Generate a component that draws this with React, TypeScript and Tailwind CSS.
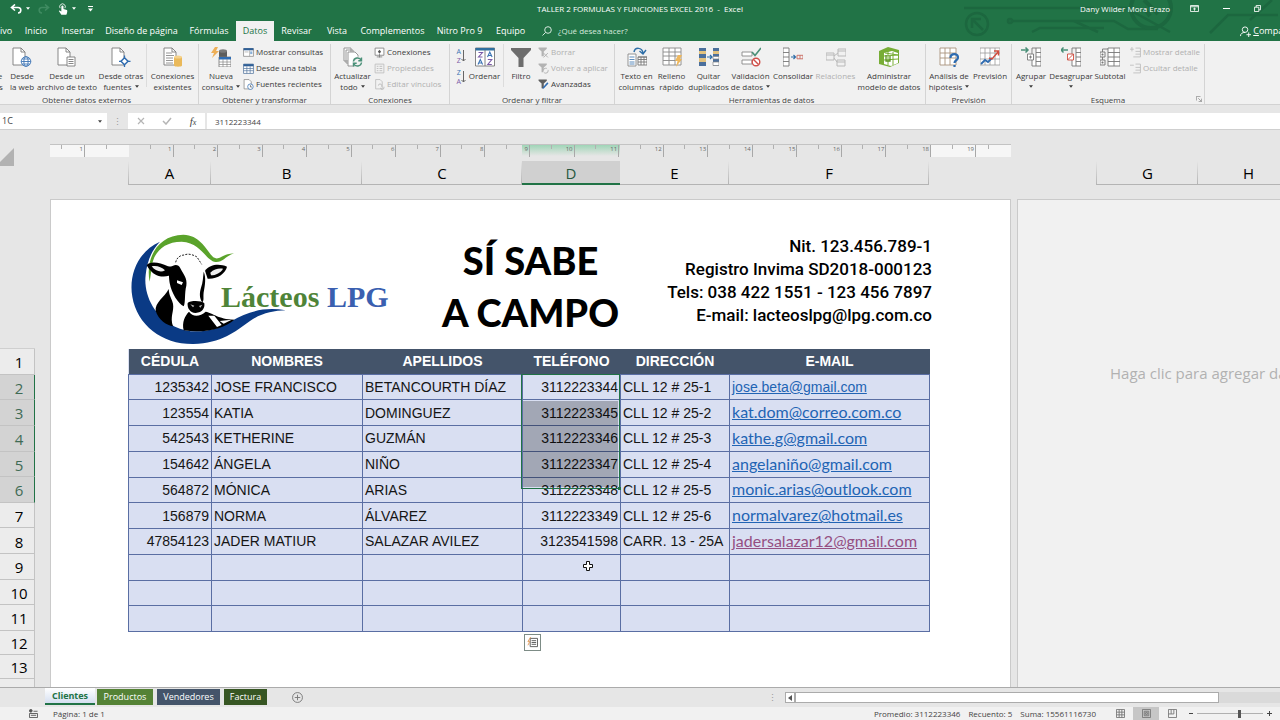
import type { ReactNode } from "react";
import { clsx } from "clsx";

/* ---------- icons ---------- */

function Icon({ children, small }: { children: ReactNode; small?: boolean }) {
  return (
    <svg viewBox="0 0 20 20" fill="none" aria-hidden="true" className={small ? "size-[11px] shrink-0" : "size-5 shrink-0"}>
      {children}
    </svg>
  );
}

function Sheet({ x = 2 }: { x?: number }) {
  return (
    <g transform={`translate(${x} 0)`} stroke="#7b7b7b" strokeWidth="0.9">
      <path d="M1 1h8l4 4v13H1z" fill="#fff" />
      <path d="M9 1v4h4" />
    </g>
  );
}

const icons: Record<string, ReactNode> = {
  access: (
    <>
      <Sheet x={1} />
      <path d="M9 10v7c0 2 8 2 8 0v-7" stroke="#c8504b" fill="#fff" />
      <ellipse cx="13" cy="10" rx="4" ry="1.6" stroke="#c8504b" fill="#fff" />
    </>
  ),
  web: (
    <>
      <Sheet x={0} />
      <g stroke="#3c74b4" strokeWidth="0.9">
        <circle cx="14" cy="14.5" r="4.8" fill="#fff" />
        <ellipse cx="14" cy="14.5" rx="2.1" ry="4.8" />
        <path d="M9.2 14.5h9.6M10 12h8M10 17h8" />
      </g>
    </>
  ),
  text: (
    <>
      <Sheet x={0} />
      <g stroke="#7b7b7b" strokeWidth="0.9">
        <path d="M10 10h8v9h-8z" fill="#fff" />
        <path d="M11.5 12.5h5M11.5 14.5h5M11.5 16.5h5" />
      </g>
    </>
  ),
  other: (
    <>
      <Sheet x={0} />
      <path d="M13.5 10.8l3.5 3.5-3.5 3.5-3.5-3.5z" stroke="#2e6bb0" strokeWidth="1.5" fill="#fff" />
      <path d="M13.5 8.5v2M13.5 18v2M8 14.3h2M17 14.3h2.5" stroke="#2e6bb0" strokeWidth="1.3" />
    </>
  ),
  existing: (
    <>
      <Sheet x={0} />
      <path d="M3 6h6M3 8.5h8M3 11h7M3 13.5h7M3 16h7" stroke="#8b8b8b" strokeWidth="0.9" />
      <path d="M11 10v8.5c0 1.6 8 1.6 8 0V10z" fill="#eab95a" />
      <ellipse cx="15" cy="10" rx="4" ry="1.6" fill="#f5d28c" />
    </>
  ),
  query: (
    <>
      <path d="M8 4v9c0 2 8 2 8 0V4z" fill="#5d5d5d" />
      <ellipse cx="12" cy="4" rx="4" ry="1.8" fill="#7a7a7a" />
      <path d="M4 0h3L5 4h3L1 11l2-5H0z" fill="#edaf58" />
      <path d="M8 10h12v10H8z" fill="#fff" stroke="#777" strokeWidth="0.8" />
      <path d="M8 10h12v2.5H8z" fill="#2f6db5" />
      <path d="M12 12v8M16 12v8M8 15h12M8 17.5h12" stroke="#888" strokeWidth="0.7" />
    </>
  ),
  show: (
    <>
      <path d="M1 3h18v14H1z" fill="#fff" stroke="#777" strokeWidth="1.2" />
      <path d="M1 2h18v4H1z" fill="#2f5f96" />
      <path d="M12 6v11M3 9h7" stroke="#999" strokeWidth="1.2" />
      <path d="M13 8h4v5h-4z" fill="#8ab0d8" />
    </>
  ),
  grid: (
    <>
      <path d="M1 2h18v17H1z" fill="#fff" stroke="#5779a0" strokeWidth="1.4" />
      <path d="M1 2h18v4H1z" fill="#2f5f96" />
      <path d="M7 6v13M13 6v13M1 10h18M1 14h18" stroke="#5779a0" strokeWidth="1.3" />
    </>
  ),
  recent: (
    <>
      <path d="M2 1h9l4 4v13H2z" fill="#fff" stroke="#777" strokeWidth="1.2" />
      <circle cx="13.5" cy="14" r="5" fill="#fff" stroke="#3c74b4" strokeWidth="1.4" />
      <path d="M13.5 11v3.5h3" stroke="#555" strokeWidth="1.3" />
    </>
  ),
  refresh: (
    <>
      <path d="M1 1h7v13H1zM3 3h7v13H3z" fill="#fff" stroke="#8b8b8b" strokeWidth="0.9" />
      <path d="M5 5h7l3 3v11H5z" fill="#fff" stroke="#8b8b8b" strokeWidth="0.9" />
      <circle cx="14.5" cy="15" r="5.4" fill="#f1f1f1" />
      <path
        d="M10.5 14.5c.4-4 6-4.8 7.7-1.3M18.5 10.5v3.2h-3.2M18.5 15.5c-.4 4-6 4.8-7.7 1.3M10.5 19.5v-3.2h3.2"
        stroke="#4a9078"
        strokeWidth="1.4"
      />
    </>
  ),
  link: (
    <>
      <path d="M2 2h16v13H2z" fill="#fff" stroke="#777" strokeWidth="1.4" />
      <path d="M10 5l3 3.5-3 3.500-3-3.500z" fill="#555" />
      <path d="M10 12v7M5 18h10" stroke="#777" strokeWidth="1.4" />
    </>
  ),
  props: (
    <>
      <path d="M2 2h16v16H2z" stroke="#b9b9b9" strokeWidth="1.4" />
      <path d="M5 6h3M10 6h5M5 10h3M10 10h5M5 14h3M10 14h5" stroke="#b9b9b9" strokeWidth="1.6" />
    </>
  ),
  editlinks: (
    <>
      <path d="M3 1h8l4 4v13H3z" stroke="#b9b9b9" strokeWidth="1.4" />
      <path d="M8 12a3 3 0 0 1 6 0v2M18 14v2a3 3 0 0 1-6 0" stroke="#b9b9b9" strokeWidth="1.6" />
    </>
  ),
  sort: (
    <>
      <path d="M.5 1h19v18H.5z" fill="#fff" stroke="#777" strokeWidth="0.9" />
      <path d="M.5 1h19v2.500H.5z" fill="#2f6f9f" />
      <path d="M10 3v16" stroke="#777" strokeWidth="0.9" />
      <path d="M3.5 5.500h4L3.500 10h4M12.800 12.500h4l-4 5h4" stroke="#7b5ba8" strokeWidth="1.1" />
      <path d="M3 17.500l2.300-5 2.300 5M4 16h2.800M12.500 10l2.300-5 2.300 5M13.500 8.500h2.800" stroke="#3c74b4" strokeWidth="1.1" />
    </>
  ),
  filter: <path d="M0 1h20v2l-7.500 8v9h-5v-9L0 3z" fill="#6d6d6d" />,
  clear: (
    <>
      <path d="M1 1h15v2l-5.500 5v9h-4V8L1 3z" fill="#b3b3b3" />
      <path d="M10 11l8 8M18 11l-8 8" stroke="#b3b3b3" strokeWidth="1.8" />
    </>
  ),
  reapply: (
    <>
      <path d="M1 1h15v2l-5.500 5v9h-4V8L1 3z" fill="#b3b3b3" />
      <circle cx="14" cy="14" r="4.500" fill="#f1f1f1" stroke="#b3b3b3" strokeWidth="1.8" strokeDasharray="10 3" />
    </>
  ),
  advanced: (
    <>
      <path d="M1 1h15v2l-5.500 5v9h-4V8L1 3z" fill="#5f5f5f" />
      <path d="M17 6l2 2-8 9-3 1 1-3z" fill="#2f6db5" />
    </>
  ),
  columns: (
    <>
      <path d="M1 7h8v12H1z" fill="#fff" stroke="#888" strokeWidth="0.9" />
      <path d="M2.500 10h5M2.500 12.500h5M2.500 15h5M2.500 17h5" stroke="#4a7fb5" strokeWidth="0.9" />
      <path d="M11 10h9v8h-9z" fill="#fff" stroke="#777" strokeWidth="0.9" />
      <path d="M11 10h9v2.500h-9M14 10v8M17 10v8M11 15h9" stroke="#777" strokeWidth="0.9" />
      <path d="M7 5c1-5 8-5 9 1M12.500 4l3.500 3 3-4" stroke="#2f6fa8" strokeWidth="1.5" />
    </>
  ),
  flash: (
    <>
      <path d="M1 1h18v17H1z" fill="#fff" stroke="#888" strokeWidth="0.9" />
      <path d="M1 5h18M1 9h18M1 13.500h18M7 1v17M13 1v17" stroke="#888" strokeWidth="0.9" />
      <path d="M16 8h4l-2 4h2l-6 8 1.500-6H13z" fill="#edb75e" />
    </>
  ),
  dedupe: (
    <>
      <path d="M0 1h7v18H0zM14 1h6v18h-6z" fill="#4b6f9c" />
      <path d="M0 4h7v3H0zM0 11h7v4H0zM14 4h6v3h-6z" fill="#e3c27e" />
      <path d="M14 9.500h6v2.500h-6zM14 15h6v3.500h-6z" fill="#fff" stroke="#888" strokeWidth="0.7" />
      <path d="M8 10h5M11 8l2 2-2 2" stroke="#2f6fa8" strokeWidth="1.2" />
    </>
  ),
  validate: (
    <>
      <path d="M1 5h10v4H1zM1 13h10v4H1z" fill="#fff" stroke="#888" strokeWidth="0.9" />
      <path d="M11 5l3 3.500L20 1" stroke="#4a9078" strokeWidth="1.7" />
      <circle cx="15" cy="15" r="3.800" stroke="#d0504a" strokeWidth="1.4" fill="#fff" />
      <path d="M12.500 12.500l5 5" stroke="#d0504a" strokeWidth="1.4" />
    </>
  ),
  consolidate: (
    <>
      <path d="M0 1h6v18H0zM0 5.500h6M0 10h6M0 14.500h6" fill="#fff" stroke="#777" strokeWidth="0.9" />
      <path d="M8 10h4M10.500 8l2 2-2 2" stroke="#2f6fa8" strokeWidth="1.2" />
      <path d="M14 8.300h6v3.500h-6zM17 8.300v3.500" stroke="#c96a60" strokeWidth="0.9" />
    </>
  ),
  relations: (
    <g stroke="#b9b9b9">
      <path d="M0 6h8v7H0zM12 2h8v7h-8zM11 13h8v6h-8zM0 8h8M12 4h8M11 15h8M8 9l4-3M8 11l3 4" />
    </g>
  ),
  model: (
    <>
      <path d="M0 4L9 0l11 3v13L11 20 0 17z" fill="#77ad35" />
      <path d="M5 6l8-2 6 2v10l-7 3-7-2z" fill="#fff" />
      <path d="M9 4v14M14 5v13M5 9l14-1M5 13l14-1M6 6l13 2" stroke="#77ad35" />
      <path d="M7 8v6h4V9" stroke="#5a9422" strokeWidth="1.3" />
    </>
  ),
  whatif: (
    <>
      <path d="M1 1h16v17H1zM1 6h16M1 11h16M6 1v17M11 1v17" stroke="#a9937d" strokeWidth="0.9" fill="#fff" />
      <path d="M11.500 11c0-5 7.500-5 7.500-.500 0 3-3.500 2.500-3.500 5.500M15.500 18v2" stroke="#2e6bb0" strokeWidth="2.2" />
    </>
  ),
  forecast: (
    <>
      <path d="M0 1h20v17H0zM0 6h20M0 12h20M5 1v17M10 1v17M15 1v17" stroke="#999" strokeWidth="0.8" fill="#fff" />
      <path d="M1 17l4-4 3 2 4-4" stroke="#2e6bb0" strokeWidth="1.8" />
      <path d="M9 11l3 1 6-7M14 4h4.500v4.500" stroke="#cf4d3f" strokeWidth="1.5" />
    </>
  ),
  group: (
    <>
      <path d="M0 3h7M4.500.5L7 3 4.500 5.500" stroke="#4a9078" strokeWidth="1.5" />
      <path d="M15 1h5v18h-5zM15 5.500h5M15 10h5M15 14.500h5M11 1h4M11 1v18h4" stroke="#777" strokeWidth="0.9" fill="#fff" />
      <path d="M6.500 7h6v6h-6zM9.500 8.500v3M8 10h3" stroke="#777" strokeWidth="0.9" fill="#fff" />
    </>
  ),
  ungroup: (
    <>
      <path d="M7 3H0M2.500.5L0 3l2.500 2.500" stroke="#4a9078" strokeWidth="1.5" />
      <path d="M15 1h5v18h-5zM15 5.500h5M15 10h5M15 14.500h5M11 1h4M11 1v18h4" stroke="#777" strokeWidth="0.9" fill="#fff" />
      <path d="M6.500 7h6v6h-6zM6.500 13l6-6" stroke="#cf4d3f" strokeWidth="0.9" fill="#fff" />
    </>
  ),
  subtotal: (
    <>
      <path d="M8 1h12v18H8zM8 5.500h12M8 10h12M8 14.500h12M14 1v18" stroke="#777" strokeWidth="0.9" fill="#fff" />
      <path d="M0 5h5v5H0zM0 13h5v5H0zM2.500 6.500v2M1.500 7.500h2M2.500 14.500v2M1.500 15.500h2M2.500 5V2H8M2.500 13v-3" stroke="#777" strokeWidth="0.9" />
    </>
  ),
  detailPlus: <path d="M0 4h7M3.500 0v8M10 2h9M10 8h9M10 13h9M6 18h13M19 2v16" stroke="#bbb" strokeWidth="1.5" />,
  detailMinus: <path d="M0 4h7M10 2h9M10 8h9M10 13h9M6 18h13M19 2v16" stroke="#bbb" strokeWidth="1.5" />,
};

/* ---------- ribbon ---------- */

function Caret() {
  return (
    <svg viewBox="0 0 6 4" aria-hidden="true" className="h-[3px] w-1 shrink-0">
      <path d="M0 0h6L3 4z" fill="currentColor" />
    </svg>
  );
}

type BigProps = { icon: string; lines: string[]; width: string; caret?: boolean; off?: boolean };

function Big({ icon, lines, width, caret, off }: BigProps) {
  return (
    <button
      className={clsx("flex shrink-0 flex-col items-center pt-[3px] leading-[11px] whitespace-nowrap", width, off && "text-[#b0b0b0]")}
    >
      <Icon>{icons[icon]}</Icon>
      <span className="mt-[3px]">{lines[0]}</span>
      <span className="flex min-h-[11px] items-center gap-[3px]">
        {lines[1]}
        {caret && <Caret />}
      </span>
    </button>
  );
}

function Small({ icon, label, off }: { icon: string; label: string; off?: boolean }) {
  return (
    <button className={clsx("flex h-4 items-center gap-[2px] whitespace-nowrap", off && "text-[#b0b0b0]")}>
      <Icon small>{icons[icon]}</Icon>
      {label}
    </button>
  );
}

function Group({ label, width, children }: { label: string; width: string; children: ReactNode }) {
  return (
    <div className={clsx("relative mt-[3px] flex shrink-0 flex-col border-r border-[#d4d4d4]", width)}>
      <div className="flex h-[51px]">{children}</div>
      <div className="text-center leading-[9px] text-[#444]">{label}</div>
    </div>
  );
}

function SortButton({ a, b }: { a: string; b: string }) {
  return (
    <button className="flex items-center" aria-label={`Ordenar de ${a} a ${b}`}>
      <span className="flex flex-col text-[7px] leading-[9px]">
        <span className="text-[#3c74b4]">{a}</span>
        <span className="text-[#7b5ba8]">{b}</span>
      </span>
      <svg viewBox="0 0 5 12" className="h-3 w-[5px]" fill="none" stroke="#666">
        <path d="M2.500 0v11M.5 9l2 2 2-2" />
      </svg>
    </button>
  );
}

function Divider() {
  return <div className="mb-2 w-px bg-[#dcdcdc]" />;
}

function Ribbon() {
  return (
    <div className="flex h-16 shrink-0 border-b border-[#d2d2d2] bg-[#f1f1f1] text-[8px] text-[#3b3b3b]">
      <Group label="Obtener datos externos" width="-ml-[25px] w-[224px]">
        <Big icon="access" lines={["Desde", "Access"]} width="w-[31px]" />
        <Big icon="web" lines={["Desde", "la web"]} width="w-8" />
        <Big icon="text" lines={["Desde un", "archivo de texto"]} width="w-[58px]" />
        <Big icon="other" lines={["Desde otras", "fuentes"]} width="w-[50px]" caret />
        <Divider />
        <Big icon="existing" lines={["Conexiones", "existentes"]} width="w-[51px]" />
      </Group>
      <Group label="Obtener y transformar" width="w-[132px]">
        <Big icon="query" lines={["Nueva", "consulta"]} width="w-[44px]" caret />
        <div>
          <Small icon="show" label="Mostrar consultas" />
          <Small icon="grid" label="Desde una tabla" />
          <Small icon="recent" label="Fuentes recientes" />
        </div>
      </Group>
      <Group label="Conexiones" width="w-[119px]">
        <Big icon="refresh" lines={["Actualizar", "todo"]} width="w-[43px]" caret />
        <div>
          <Small icon="link" label="Conexiones" />
          <Small icon="props" label="Propiedades" off />
          <Small icon="editlinks" label="Editar vínculos" off />
        </div>
      </Group>
      <Group label="Ordenar y filtrar" width="w-[165px]">
        <div className="flex w-4 flex-col items-end gap-[3px] pt-[3px]">
          <SortButton a="A" b="Z" />
          <SortButton a="Z" b="A" />
        </div>
        <Big icon="sort" lines={["Ordenar"]} width="w-[37px]" />
        <Divider />
        <Big icon="filter" lines={["Filtro"]} width="w-[34px]" />
        <div>
          <Small icon="clear" label="Borrar" off />
          <Small icon="reapply" label="Volver a aplicar" off />
          <Small icon="advanced" label="Avanzadas" />
        </div>
      </Group>
      <Group label="Herramientas de datos" width="w-[311px] pl-[3px]">
        <Big icon="columns" lines={["Texto en", "columnas"]} width="w-[37px]" />
        <Big icon="flash" lines={["Relleno", "rápido"]} width="w-[33px]" />
        <Big icon="dedupe" lines={["Quitar", "duplicados"]} width="w-[41px]" />
        <Big icon="validate" lines={["Validación", "de datos"]} width="w-[43px]" caret />
        <Big icon="consolidate" lines={["Consolidar"]} width="w-[42px]" />
        <Big icon="relations" lines={["Relaciones"]} width="w-[43px]" off />
        <Big icon="model" lines={["Administrar", "modelo de datos"]} width="w-[64px]" />
      </Group>
      <Group label="Previsión" width="w-[86px]">
        <Big icon="whatif" lines={["Análisis de", "hipótesis"]} width="w-[46px]" caret />
        <Big icon="forecast" lines={["Previsión"]} width="w-9" />
      </Group>
      <Group label="Esquema" width="w-[193px]">
        <Big icon="group" lines={["Agrupar"]} width="w-[38px]" caret />
        <Big icon="ungroup" lines={["Desagrupar"]} width="w-[42px]" caret />
        <Big icon="subtotal" lines={["Subtotal"]} width="w-[36px]" />
        <div className="pl-[2px]">
          <Small icon="detailPlus" label="Mostrar detalle" off />
          <Small icon="detailMinus" label="Ocultar detalle" off />
        </div>
        <svg viewBox="0 0 8 8" className="absolute right-[2px] bottom-[2px] size-[6px]" fill="none" stroke="#888">
          <path d="M.5 6V.5H6M3 3l4 4M7.500 3.500v4h-4" />
        </svg>
      </Group>
    </div>
  );
}

/* ---------- title bar and tabs ---------- */

const tabs = [
  { name: "Archivo", width: "w-[41px]" },
  { name: "Inicio", width: "w-[38px]" },
  { name: "Insertar", width: "w-[46px]" },
  { name: "Diseño de página", width: "w-[81px]" },
  { name: "Fórmulas", width: "w-[54px]" },
  { name: "Datos", width: "w-[38px]" },
  { name: "Revisar", width: "w-[45px]" },
  { name: "Vista", width: "w-9" },
  { name: "Complementos", width: "w-[75px]" },
  { name: "Nitro Pro 9", width: "w-[59px]" },
  { name: "Equipo", width: "w-[43px]" },
];

function Header() {
  return (
    <header className="relative shrink-0 overflow-hidden bg-[#217346] text-[9px] text-white">
      <svg viewBox="0 0 320 41" className="absolute top-0 right-0 h-[41px] w-80" fill="none" stroke="#1c673f" strokeWidth="2.5" aria-hidden="true">
        <path d="M4 8h100l30 0M52 21h62l24 11M72 32l8-4h34l30 0M114 21h40l14 8h30M146 8h20l44 24M250 33l18-18h50M290 20l22-20" />
        <circle cx="17" cy="24" r="11" />
        <path d="M12 19l11 11M12 28V19h9" />
        <circle cx="50" cy="21" r="2" />
        <circle cx="191" cy="8" r="20" strokeWidth="4" />
        <path d="M184 0l14 14M184 8l6 8" strokeWidth="4" />
      </svg>
      <div className="relative grid h-[17px] grid-cols-3 items-center">
        <div className="flex items-center gap-2 pl-[10px]">
          <svg viewBox="0 0 12 10" className="h-[10px] w-3" fill="none" stroke="#fff" strokeWidth="1.6">
            <path d="M5 .5L1.500 3.500 5 6.500M1.500 3.500H8c4 0 3.500 5.500 0 5.500" />
          </svg>
          <span className="-ml-1 flex">
            <Caret />
          </span>
          <svg viewBox="0 0 12 10" className="h-[10px] w-3" fill="none" stroke="#3f8b61" strokeWidth="1.6">
            <path d="M7 .5l3.500 3L7 6.500M10.500 3.500H4C0 3.500.5 9 4 9" />
          </svg>
          <svg viewBox="0 0 12 14" className="h-3 w-[10px]" fill="#fff">
            <path d="M4 4a1.300 1.300 0 0 1 2.600 0v3l4 1.200c1 .4.6 3-.6 5.800H4L1 9.500l1-.8 2 1.300z" />
            <path d="M2.500 6a3.400 3.400 0 1 1 5.800 0" fill="none" stroke="#fff" />
          </svg>
          <span className="-ml-1 flex">
            <Caret />
          </span>
          <svg viewBox="0 0 6 7" className="ml-1 h-[6px] w-[5px]" fill="#fff">
            <path d="M0 0h6v1H0zM0 3h6L3 6.500z" />
          </svg>
        </div>
        <div className="text-center text-[8px]">TALLER 2 FORMULAS Y FUNCIONES EXCEL 2016 &nbsp;-&nbsp; Excel</div>
        <div className="flex items-center justify-end gap-6 pr-[19px]">
          <span className="-mr-1 text-[8px]">Dany Wilder Mora Erazo</span>
          <svg viewBox="0 0 10 8" className="h-[7px] w-[9px]" fill="none" stroke="#fff">
            <path d="M.5.5h9v7h-9zM.5 2h9M5 6.500V3.500M3.500 4.800L5 3.500l1.500 1.300" />
          </svg>
          <span className="h-px w-[7px] bg-white" />
          <svg viewBox="0 0 8 8" className="size-[7px]" fill="none" stroke="#fff">
            <path d="M.5 2.500h5v5h-5zM2.500 2.500v-2h5v5h-2" />
          </svg>
        </div>
      </div>
      <nav className="relative mt-1 -ml-6 flex h-5 items-center whitespace-nowrap">
        {tabs.map((t) => (
          <button
            key={t.name}
            className={clsx("h-5 shrink-0", t.width, t.name === "Datos" && "bg-[#f1f1f1] text-[#217346]")}
          >
            {t.name}
          </button>
        ))}
        <svg viewBox="0 0 10 10" className="ml-[10px] size-[10px]" fill="none" stroke="#d5e8dd">
          <circle cx="6" cy="4" r="3.300" />
          <path d="M3.600 6.400L.5 9.500" />
        </svg>
        <button className="ml-[6px] text-[8px] text-[#d5e8dd]">¿Qué desea hacer?</button>
        <button className="-mr-4 ml-auto flex items-center gap-[2px]">
          <svg viewBox="0 0 12 12" className="size-[11px]" fill="none" stroke="#fff">
            <circle cx="5.500" cy="4" r="3" />
            <path d="M.5 11C.5 8 3 7 5.500 7M7 9.500h5M9.500 7v5" />
          </svg>
          <span>
            <u>C</u>ompartir
          </span>
        </button>
      </nav>
    </header>
  );
}

function FormulaBar() {
  return (
    <div className="flex h-[25px] shrink-0 items-end border-b border-[#cfcfcf] bg-[#e6e6e6] pt-2 text-[9px] text-[#444]">
      <div className="flex h-4 w-[107px] items-center bg-white pr-[5px]">
        <input aria-label="Cuadro de nombres" defaultValue="1C" className="w-0 flex-1 pl-[2px] outline-none" />
        <Caret />
      </div>
      <div className="w-[21px] self-center text-center leading-none text-[#999]">⋮</div>
      <div className="flex h-4 w-[77px] items-center justify-around bg-white">
        <svg viewBox="0 0 8 8" className="size-2" stroke="#b5b5b5" strokeWidth="1.2">
          <path d="M1 1l6 6M7 1L1 7" />
        </svg>
        <svg viewBox="0 0 10 8" className="h-2 w-[10px]" fill="none" stroke="#b5b5b5" strokeWidth="1.5">
          <path d="M1 4l3 3 5-6" />
        </svg>
        <button className="font-['Liberation_Serif'] text-[11px] leading-none italic">
          f<span className="text-[8px]">x</span>
        </button>
      </div>
      <input aria-label="Barra de fórmulas" defaultValue="3112223344" className="ml-[2px] h-4 flex-1 bg-white pl-2 text-[8px] outline-none" />
    </div>
  );
}

/* ---------- sheet ---------- */

const columns = [
  { letter: "A", width: "w-[83px]", title: "CÉDULA" },
  { letter: "B", width: "w-[151px]", title: "NOMBRES" },
  { letter: "C", width: "w-[160px]", title: "APELLIDOS" },
  { letter: "D", width: "w-[98px]", title: "TELÉFONO" },
  { letter: "E", width: "w-[109px]", title: "DIRECCIÓN" },
  { letter: "F", width: "w-[200px]", title: "E-MAIL" },
];

const clients = [
  ["1235342", "JOSE FRANCISCO", "BETANCOURTH DÍAZ", "3112223344", "CLL 12 # 25-1", "jose.beta@gmail.com"],
  ["123554", "KATIA", "DOMINGUEZ", "3112223345", "CLL 12 # 25-2", "kat.dom@correo.com.co"],
  ["542543", "KETHERINE", "GUZMÁN", "3112223346", "CLL 12 # 25-3", "kathe.g@gmail.com"],
  ["154642", "ÁNGELA", "NIÑO", "3112223347", "CLL 12 # 25-4", "angelaniño@gmail.com"],
  ["564872", "MÓNICA", "ARIAS", "3112223348", "CLL 12 # 25-5", "monic.arias@outlook.com"],
  ["156879", "NORMA", "ÁLVAREZ", "3112223349", "CLL 12 # 25-6", "normalvarez@hotmail.es"],
  ["47854123", "JADER MATIUR", "SALAZAR AVILEZ", "3123541598", "CARR. 13 - 25A", "jadersalazar12@gmail.com"],
  ["", "", "", "", "", ""],
  ["", "", "", "", "", ""],
  ["", "", "", "", "", ""],
];

function RulerCell({ n, className }: { n?: number; className?: string }) {
  return (
    <div className={clsx("relative h-3 pr-px text-right leading-[9px]", n && "border-r border-[#a8a8a8]", className)}>
      {n}
      <span className="absolute top-0 right-[22px] h-1 w-px bg-[#b0b0b0]" />
    </div>
  );
}

function Ruler() {
  return (
    <div className="ml-[50px] flex h-[13px] w-[961px] border-t border-[#c3c3c3] text-[6px] text-[#666]">
      <div className="flex bg-[#f6f6f6]">
        <RulerCell n={1} className="w-[35px]" />
        <RulerCell className="w-[44px]" />
      </div>
      <div className="relative grid w-[802px] grid-cols-18">
        <div className="absolute left-[393px] h-[11px] w-[98px] bg-linear-to-b from-[#9fd5b7] to-[#e6e6e6]" />
        {Array.from({ length: 18 }, (_, i) => (
          <RulerCell key={i} n={i + 1} />
        ))}
      </div>
      <div className="flex flex-1 bg-[#f6f6f6]">
        <RulerCell n={19} className="w-[45px]" />
        <RulerCell className="w-[35px]" />
      </div>
    </div>
  );
}

function ColumnHeader({ letter, width, selected }: { letter: string; width: string; selected?: boolean }) {
  return (
    <div
      className={clsx(
        "h-6 shrink-0 border-b text-center leading-6",
        width,
        selected
          ? "border-b-2 border-[#217346] bg-[#d0d0d0] text-[#28583f]"
          : "border-[#b4b4b4] bg-linear-to-b from-[#e6e6e6] to-[#b4b4b4] bg-[length:1px_100%] bg-right bg-no-repeat",
      )}
    >
      {letter}
    </div>
  );
}

function Headings() {
  return (
    <div className="mt-1 flex pl-[128px] text-[15px] text-black">
      <div className="h-6 w-px shrink-0 bg-linear-to-b from-[#e6e6e6] to-[#b4b4b4]" />
      <div className="-ml-px flex">
        {columns.map((c) => (
          <ColumnHeader key={c.letter} letter={c.letter} width={c.width} selected={c.letter === "D"} />
        ))}
      </div>
      <div className="ml-[167px] h-6 w-px shrink-0 bg-linear-to-b from-[#e6e6e6] to-[#b4b4b4]" />
      <ColumnHeader letter="G" width="w-[101px]" />
      <ColumnHeader letter="H" width="w-[101px]" />
    </div>
  );
}

function RowHeaders() {
  return (
    <div className="w-[50px] shrink-0 pt-[149px] text-center text-[15px] text-black">
      <div className="grid h-[283px] w-[35px] grid-rows-11 border-t border-[#cfcfcf]">
        {Array.from({ length: 11 }, (_, i) => {
          const selected = i >= 1 && i <= 5;
          return (
            <div
              key={i}
              className={clsx(
                "flex items-center justify-center border-r border-b border-[#c3c3c3] pt-[2px] pl-1",
                selected ? "border-r-[#217346] bg-[#d3d3d3] text-[#3f6b55]" : "bg-[#ececec]",
              )}
            >
              {i + 1}
            </div>
          );
        })}
      </div>
      {[12, 13, 14].map((n) => (
        <div key={n} className="h-6 w-[35px] border-r border-b border-[#c3c3c3] bg-[#ececec] pl-1 leading-6">
          {n}
        </div>
      ))}
    </div>
  );
}

function Logo() {
  return (
    <svg viewBox="0 0 810 390" className="h-[130px] w-[270px] shrink-0" role="img" aria-label="Lácteos LPG">
      <path
        d="M105 50C40 78 10 150 22 215c14 85 90 143 183 142 85-2 125-37 170-69 35-24 70-31 107-32-62-11-112 3-162 32-50 32-120 42-170 17-65-30-95-100-88-155 4-40 18-75 43-100z"
        fill="#0a3a85"
      />
      <path
        d="M74 170C60 100 98 30 175 29c50 1 67 44 90 68 18 11 22-9 62-12-27 9-32 27-55 26-30-3-42-58-102-61-60 0-88 40-90 80z"
        fill="#5aa32b"
      />
      {/* cow */}
      <path
        d="M150 118c4-22 28-32 50-28 20 3 30 14 33 30 6 25 12 50 8 80-2 25 2 50-15 62-15 8-40 6-48-12-12-25-38-50-43-85-1-20 3-40 15-47z"
        fill="#fff"
      />
      <path d="M152 112c3-14 14-22 26-22 12-6 28 0 38 6l14 22" fill="none" stroke="#222" strokeWidth="3" strokeDasharray="6 4" />
      <path d="M65 121c8-13 38-10 64 3 10 2 18 0 22-2l-6 22c-12 12-30 12-44 9-16-4-28-18-36-32z" />
      <path d="M80 124c14-4 30 2 40 12-12 8-30 2-40-12z" fill="#eee" />
      <path d="M240 137c15-20 44-22 66-12-4 20-30 38-58 36z" />
      <path d="M256 143c10-12 28-14 38-12-6 12-22 20-36 20z" fill="#eee" />
      <path d="M136 128c10-10 24-12 30 2 8 16 22 30 18 52-6 22-2 50-8 62-16-8-36-38-42-70-2-16-4-34 2-46z" />
      <path d="M156 166l18 6-4 8-14-6z" fill="#fff" />
      <path d="M236 140c8 18 4 40 0 62-2 16 2 24-4 30-10-14-8-30-4-44 6-16 6-32 8-48z" />
      <path d="M188 234c8-8 42-8 50 1 2 14-6 28-26 29-18-1-26-16-24-30z" />
      <path d="M196 238l12 4-4 5zM232 239l-10 4 4 5z" fill="#bbb" />
      <path d="M131 192c-12 25-42 40-39 66 8 26 34 44 52 46-10-30 4-44 0-68-4-16-12-24-13-44z" />
      <path d="M176 316c-6-24 4-44 16-56 12 18 34 14 50 0 22 4 36 22 86 24-30 26-88 42-152 32z" />
      <path d="M250 272l26 34 14-6-22-28zM284 288l36-4-24 12z" fill="#fff" />
      <g className="font-['Liberation_Serif'] font-bold" fontSize="90">
        <text x="288" y="247" fill="#4f8438">
          Lácteos
        </text>
        <text x="606" y="247" fill="#3a5fb0">
          LPG
        </text>
      </g>
    </svg>
  );
}

function PageHeader() {
  return (
    <div className="flex h-[149px] items-start pt-[25px]">
      <div className="w-[300px] pl-[74px]">
        <Logo />
      </div>
      <div className="flex-1 pt-[9px] text-center font-['Lato'] text-[38px] leading-[52px] font-black text-black">
        SÍ SABE
        <br />A CAMPO
      </div>
      <div className="w-[300px] shrink-0 pt-[10px] pr-[78px] font-['Roboto'] text-[17px] leading-[23px] font-medium whitespace-nowrap text-black">
        <div className="flex flex-col items-end">
          <span>Nit. 123.456.789-1</span>
          <span>Registro Invima SD2018-000123</span>
          <span>Tels: 038 422 1551 - 123 456 7897</span>
          <span>E-mail: lacteoslpg@lpg.com.co</span>
        </div>
      </div>
    </div>
  );
}

function ClientTable() {
  return (
    <div className="relative ml-[77px] w-[802px]">
      <table className="h-[283px] w-full table-fixed border-collapse bg-[#d9dff2] font-['Liberation_Sans'] text-[14px] leading-5 whitespace-nowrap text-[#151515]">
        <thead>
          <tr className="h-[25px] bg-[#44546a] text-white">
            {columns.map((c) => (
              <th key={c.letter} className={clsx("p-0", c.width)}>
                {c.title}
              </th>
            ))}
          </tr>
        </thead>
        <tbody>
          {clients.map((row, r) => (
            <tr key={r} className="h-[25px]">
              {row.map((value, c) => (
                <td key={c} className={clsx("border border-[#5a6ea3] px-[2px] py-0", (c === 0 || c === 3) && "text-right")}>
                  {c === 5 && value ? (
                    <a
                      href={`mailto:${value}`}
                      className={clsx(
                        "underline",
                        r === 6 ? "text-[#954f82]" : "text-[#2264b4]",
                        r > 0 && "font-['Lato'] text-[16px]",
                      )}
                    >
                      {value}
                    </a>
                  ) : (
                    value
                  )}
                </td>
              ))}
            </tr>
          ))}
        </tbody>
      </table>

      {/* selected range */}
      <div className="pointer-events-none absolute top-[25px] left-[393px] h-[115px] w-[99px] border border-[#217346] px-px pt-[26px] pb-px">
        <div className="h-full bg-black/25" />
        <span className="absolute -right-[2px] -bottom-[2px] size-[3px] bg-[#217346]" />
      </div>
      <svg viewBox="0 0 12 12" className="absolute top-[211px] left-[454px] size-3" fill="#fff" stroke="#111">
        <path d="M4.500 1.500h3v3h3v3h-3v3h-3v-3h-3v-3h3z" />
      </svg>
      <button
        className="absolute top-[285px] left-[396px] flex size-[17px] items-center justify-center border border-[#7d8c86] bg-white"
        aria-label="Análisis rápido"
      >
        <svg viewBox="0 0 12 12" className="size-[11px]" fill="none" stroke="#555">
          <path d="M3.500 1.500h8v9h-8zM5 4h5M5 6h5M5 8h5" />
          <path d="M4 0L1 5h2l-2 4" stroke="#e59a55" />
        </svg>
      </button>
    </div>
  );
}

function Workspace() {
  return (
    <main className="relative flex min-h-0 flex-1 flex-col overflow-hidden bg-[#e6e6e6] pt-[14px]">
      <svg viewBox="0 0 14 18" className="absolute top-[18px] left-0 h-[18px] w-[14px]">
        <path d="M14 0v18H0v-4z" fill="#b2b2b2" />
      </svg>
      <Ruler />
      <Headings />
      <div className="mt-[14px] flex min-h-0 flex-1">
        <RowHeaders />
        <section className="w-[961px] shrink-0 border border-b-0 border-[#cacaca] bg-white">
          <PageHeader />
          <ClientTable />
        </section>
        <section className="ml-[6px] min-w-0 flex-1 overflow-hidden border-t border-l border-[#cacaca] bg-[#f1f1f1] pt-[162px] pl-[92px] text-[15px] whitespace-nowrap text-[#b1b1b1]">
          Haga clic para agregar datos
        </section>
      </div>
    </main>
  );
}

/* ---------- footer ---------- */

function Footer() {
  return (
    <footer className="shrink-0 text-[9px]">
      <div className="flex h-5 items-start border-t border-[#ababab] bg-[#e6e6e6] pl-[45px]">
        <button className="h-[17px] w-[50px] border-b-2 border-[#217346] bg-linear-to-b from-white to-[#d5dff0] font-bold text-[#217346]">
          Clientes
        </button>
        <button className="mt-px ml-[2px] h-4 w-14 bg-[#548235] text-white">Productos</button>
        <button className="mt-px ml-1 h-4 w-[63px] bg-[#44546a] text-white">Vendedores</button>
        <button className="mt-px ml-1 h-4 w-[43px] bg-[#375623] text-white">Factura</button>
        <button aria-label="Hoja nueva" className="mt-1 ml-[25px]">
          <svg viewBox="0 0 12 12" className="size-[11px]" fill="none" stroke="#777">
            <circle cx="6" cy="6" r="5.400" />
            <path d="M6 3v6M3 6h6" />
          </svg>
        </button>
        <span className="mt-1 ml-auto leading-3 text-[#999]">⋮</span>
        <div className="mt-1 ml-2 flex h-[11px] w-[495px] bg-[#dadada]">
          <button aria-label="Desplazar" className="flex w-[10px] items-center justify-center border border-[#ababab] bg-white">
            <svg viewBox="0 0 4 6" className="h-[6px] w-1">
              <path d="M4 0v6L0 3z" fill="#555" />
            </svg>
          </button>
          <div className="w-[424px] border border-[#ababab] bg-white" />
        </div>
      </div>
      <div className="flex h-[13px] items-center bg-[#f1f1f1] pl-[29px] text-[8px] leading-3 text-[#444]">
        <svg viewBox="0 0 10 10" className="size-[9px]" fill="none" stroke="#555">
          <circle cx="2" cy="2" r="1.500" fill="#555" />
          <path d="M5 2.500h4.500M.5 5h9v4.500h-9zM2 7h6" />
        </svg>
        <span className="ml-[15px]">Página: 1 de 1</span>
        <span className="ml-auto">Promedio: 3112223346</span>
        <span className="ml-2">Recuento: 5</span>
        <span className="ml-2">Suma: 15561116730</span>
        <button aria-label="Normal" className="ml-3 flex h-[13px] w-[25px] items-center justify-center">
          <svg viewBox="0 0 10 10" className="size-[9px]" fill="none" stroke="#777">
            <path d="M.5.500h9v9h-9zM3.500.500v9M6.500.500v9M.5 3.500h9M.5 6.500h9" />
          </svg>
        </button>
        <button aria-label="Diseño de página" className="flex h-[13px] w-[26px] items-center justify-center bg-[#c6c6c6]">
          <svg viewBox="0 0 10 10" className="size-[9px]" fill="none" stroke="#777">
            <path d="M.5.500h9v9h-9zM2.500 2.500h5v5h-5zM4 4h2v2H4z" />
          </svg>
        </button>
        <button aria-label="Salto de página" className="flex h-[13px] w-[26px] items-center justify-center">
          <svg viewBox="0 0 10 10" className="size-[9px]" fill="none" stroke="#777">
            <path d="M.5.500h9v9h-9zM3.500.500v5M6.500.500v5M.5 5.500h6" />
          </svg>
        </button>
        <div className="ml-1 flex items-center gap-1 pr-2">
          <button aria-label="Alejar" className="h-px w-1 bg-[#444]" />
          <input
            type="range"
            aria-label="Zoom"
            defaultValue={65}
            className="h-px w-[66px] appearance-none bg-[#b0b0b0] [&::-webkit-slider-thumb]:h-[8px] [&::-webkit-slider-thumb]:w-[3px] [&::-webkit-slider-thumb]:appearance-none [&::-webkit-slider-thumb]:bg-[#555]"
          />
          <button aria-label="Acercar">
            <svg viewBox="0 0 5 5" className="size-[5px]" stroke="#444">
              <path d="M2.500 0v5M0 2.500h5" />
            </svg>
          </button>
        </div>
      </div>
    </footer>
  );
}

export default function App() {
  return (
    <div className="flex h-screen flex-col overflow-hidden font-['Open_Sans',sans-serif]">
      <Header />
      <Ribbon />
      <FormulaBar />
      <Workspace />
      <Footer />
    </div>
  );
}
